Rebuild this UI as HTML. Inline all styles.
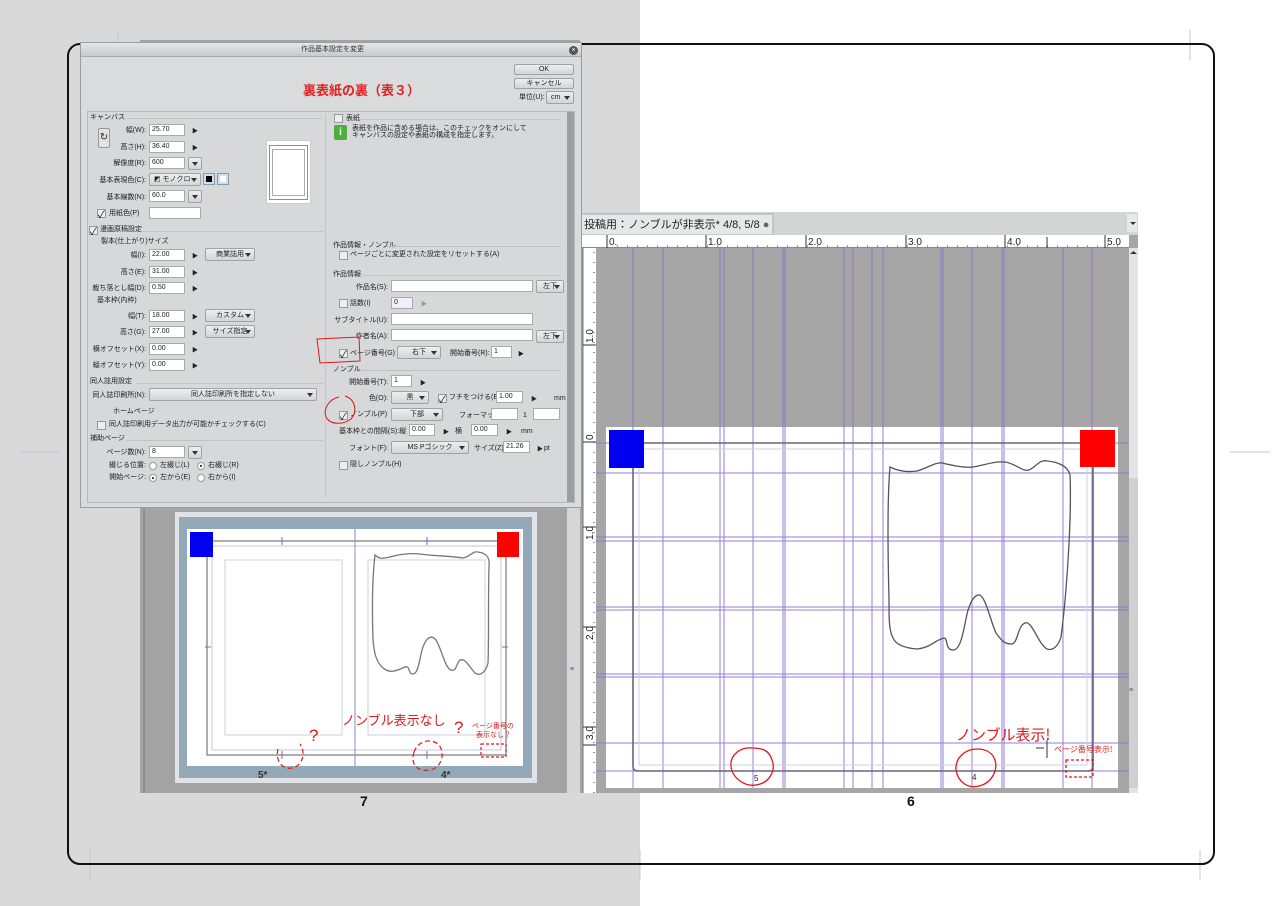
<!DOCTYPE html>
<html><head><meta charset="utf-8">
<style>
*{margin:0;padding:0;box-sizing:border-box}
body{width:1280px;height:906px;position:relative;overflow:hidden;background:#fff;font-family:"Liberation Sans","Noto Sans CJK JP",sans-serif}
.a{position:absolute}
#dlg{position:absolute;left:80px;top:42px;width:502px;height:466px;background:#d9dbdd;border:1px solid #9a9c9e;font-size:7px;color:#222}
#dlg .t{position:absolute;white-space:nowrap;line-height:10px}
.l{position:absolute;white-space:nowrap;text-align:right;line-height:10px}
.in{position:absolute;height:12px;background:#fff;border:1px solid #a8aaac;font-size:7px;line-height:10px;padding-left:2px}
.sel{position:absolute;height:13px;background:linear-gradient(#eceef0,#d2d4d6);border:1px solid #a0a2a4;border-radius:2px;font-size:7px;line-height:11px;text-align:center}
.sel:after{content:"";position:absolute;right:3px;top:4px;border:3px solid transparent;border-top:4px solid #333}
#dlg .sel.nb:after{display:none}
.cb{position:absolute;width:9px;height:9px;background:#eee;border:1px solid #999}
.ck:before{content:"✓";position:absolute;left:0;top:-4px;font-size:10px;color:#111}
.ar{position:absolute;font-size:6px}
.sec{position:absolute;height:1px;background:#bfc1c3}
.rd{position:absolute;width:8px;height:8px;border-radius:50%;background:#fff;border:1px solid #999}
.rd.on:after{content:"";position:absolute;left:2px;top:2px;width:2px;height:2px;border-radius:50%;background:#111}
</style></head><body>
<svg class="a" style="left:0;top:0" width="1280" height="906" viewBox="0 0 1280 906">
<rect x="0" y="0" width="640" height="906" fill="#d9d9d9"/>
<g stroke="#c4c4d8" stroke-width="1">
<line x1="118" y1="30" x2="118" y2="60"/><line x1="100" y1="48" x2="140" y2="48"/>
<line x1="1190" y1="30" x2="1190" y2="60"/><line x1="1230" y1="452" x2="1270" y2="452"/>
<line x1="20" y1="452" x2="60" y2="452"/><line x1="640" y1="850" x2="640" y2="880"/>
<line x1="90" y1="850" x2="90" y2="880"/><line x1="1200" y1="850" x2="1200" y2="880"/>
</g>
<rect x="140" y="40" width="440" height="753" fill="#a3a3a3"/>
<rect x="143" y="500" width="2" height="293" fill="#8e8e8e"/>
<rect x="567" y="505" width="13" height="288" fill="#d4d6d8"/>
<text x="570" y="671" font-size="7" fill="#555">≡</text>
<rect x="175" y="512" width="362" height="271" fill="#e0e4e6"/>
<rect x="179" y="517" width="353" height="261" fill="#93a9b7"/>
<rect x="187" y="529" width="336" height="237" fill="#fff"/>
<rect x="207" y="541" width="299" height="214" fill="none" stroke="#777" stroke-width="1.2"/>
<rect x="212" y="546" width="289" height="204" fill="none" stroke="#c4c4dc"/>
<line x1="355" y1="529" x2="355" y2="766" stroke="#8a8ab4"/>
<rect x="225" y="560" width="117" height="175" fill="none" stroke="#cfcfe0"/>
<rect x="368" y="560" width="117" height="175" fill="none" stroke="#cfcfe0"/>
<g stroke="#7070b0"><line x1="282" y1="537" x2="282" y2="545"/><line x1="278" y1="541" x2="286" y2="541"/><line x1="427" y1="537" x2="427" y2="545"/><line x1="423" y1="541" x2="431" y2="541"/><line x1="205" y1="647" x2="211" y2="647"/><line x1="502" y1="647" x2="508" y2="647"/><line x1="282" y1="751" x2="282" y2="759"/><line x1="427" y1="751" x2="427" y2="759"/></g>
<rect x="190" y="532" width="23" height="25" fill="#0000ee"/>
<rect x="497" y="532" width="22" height="25" fill="#f00"/>
<path d="M375,555 C380,560 385,558 390,557 C400,554 410,553 420,554 C435,556 450,556 463,558 C470,557 472,551 478,552 C486,553 490,557 489,566 C488,600 489,640 488,663 C486,672 480,677 475,673 C468,665 465,658 460,660 C456,663 457,672 451,670 C445,668 442,650 436,640 C430,633 425,640 422,650 C419,662 418,675 412,674 C408,673 410,665 405,667 C398,670 390,675 382,667 C375,660 374,650 373,640 C372,610 372,580 375,555Z" fill="none" stroke="#777" stroke-width="1.3"/>
<text x="258" y="778" font-size="10" font-weight="bold" fill="#333">5*</text>
<text x="441" y="778" font-size="10" font-weight="bold" fill="#333">4*</text>
<g stroke="#e01818" fill="none" stroke-width="1.2">
<path d="M278,749 C275,760 282,770 292,768 C303,766 306,752 300,744" stroke-dasharray="5,3"/>
<path d="M414,752 C410,765 418,772 430,770 C442,768 446,752 438,744 C430,738 418,741 414,752" stroke-dasharray="5,3"/>
<rect x="481" y="744" width="25" height="13" stroke-dasharray="3,2"/>
</g>
<text x="342" y="725" font-size="13" fill="#e01818" font-family="Noto Sans CJK JP">ノンブル表示なし</text>
<text x="309" y="741" font-size="17" fill="#e01818">?</text>
<text x="454" y="733" font-size="17" fill="#e01818">?</text>
<text x="472" y="728" font-size="7" fill="#e01818" font-family="Noto Sans CJK JP">ページ番号の</text>
<text x="476" y="737" font-size="7" fill="#e01818" font-family="Noto Sans CJK JP">表示なし？</text>
<text x="360" y="806" font-size="14" font-weight="bold" fill="#111">7</text>

<rect x="580" y="212" width="558" height="581" fill="#a6a6a6"/>
<rect x="580" y="212" width="558" height="23" fill="#d2d4d6"/>
<rect x="580" y="214" width="193" height="21" fill="#e6e7e8" stroke="#aaa"/>
<text x="584" y="228" font-size="11" fill="#222" font-family="Liberation Sans,Noto Sans CJK JP">投稿用：ノンブルが非表示* 4/8, 5/8 <tspan fill="#666">●</tspan></text>
<rect x="1127" y="214" width="10" height="18" fill="#e8e8e8"/><path d="M1130,222 l3,3 l3,-3z" fill="#333"/>
<rect x="580" y="235" width="549" height="13" fill="#fff"/>
<line x1="580" y1="247.5" x2="1129" y2="247.5" stroke="#888"/>
<g stroke="#333" stroke-width="1">
<line x1="607" y1="235" x2="607" y2="248"/><line x1="706" y1="235" x2="706" y2="248"/><line x1="806" y1="235" x2="806" y2="248"/><line x1="906" y1="235" x2="906" y2="248"/><line x1="1005" y1="235" x2="1005" y2="248"/><line x1="1105" y1="235" x2="1105" y2="248"/><line x1="1047" y1="237" x2="1047" y2="248"/>
</g>
<g stroke="#333" stroke-dasharray="1,9"><line x1="617" y1="246" x2="1125" y2="246"/></g>
<g font-size="10" fill="#222"><text x="609" y="245">0.</text><text x="708" y="245">1.0</text><text x="808" y="245">2.0</text><text x="908" y="245">3.0</text><text x="1007" y="245">4.0</text><text x="1107" y="245">5.0</text></g>
<rect x="583" y="248" width="13" height="545" fill="#fff"/>
<line x1="583" y1="248" x2="583" y2="793" stroke="#777"/>
<g stroke="#333" stroke-dasharray="1,9"><line x1="594" y1="252" x2="594" y2="793"/></g>
<g stroke="#333"><line x1="583" y1="345" x2="596" y2="345"/><line x1="583" y1="442" x2="596" y2="442"/><line x1="583" y1="527" x2="596" y2="527"/><line x1="583" y1="627" x2="596" y2="627"/><line x1="583" y1="727" x2="596" y2="727"/><line x1="583" y1="745" x2="596" y2="745"/></g>
<g font-size="10" fill="#222">
<text transform="translate(593,343) rotate(-90)">1.0</text>
<text transform="translate(593,440) rotate(-90)">0</text>
<text transform="translate(593,540) rotate(-90)">1.0</text>
<text transform="translate(593,640) rotate(-90)">2.0</text>
<text transform="translate(593,740) rotate(-90)">3.0</text>
</g>
<rect x="1129" y="248" width="9" height="545" fill="#e4e4e4"/>
<rect x="1129" y="478" width="9" height="310" fill="#d0d0d0"/>
<path d="M1130,254 l3.5,-3 l3.5,3z" fill="#333"/>
<text x="1129" y="692" font-size="7" fill="#555">≡</text>
<rect x="606" y="427" width="512" height="361" fill="#fff"/>
<g stroke="#9070d0" stroke-width="1" opacity="0.9">
<line x1="633" y1="248" x2="633" y2="788"/><line x1="663" y1="248" x2="663" y2="788"/><line x1="720" y1="248" x2="720" y2="788"/><line x1="724" y1="248" x2="724" y2="788"/><line x1="753" y1="248" x2="753" y2="788"/><line x1="783" y1="248" x2="783" y2="788"/><line x1="785" y1="248" x2="785" y2="788"/><line x1="844" y1="248" x2="844" y2="788"/><line x1="853" y1="248" x2="853" y2="788"/><line x1="872" y1="248" x2="872" y2="788"/><line x1="883" y1="248" x2="883" y2="788"/><line x1="941" y1="248" x2="941" y2="788"/><line x1="943" y1="248" x2="943" y2="788"/><line x1="972" y1="248" x2="972" y2="788"/><line x1="1002" y1="248" x2="1002" y2="788"/><line x1="1004" y1="248" x2="1004" y2="788"/><line x1="1063" y1="248" x2="1063" y2="788"/><line x1="1092" y1="248" x2="1092" y2="788"/>
<line x1="596" y1="443" x2="1129" y2="443"/><line x1="596" y1="473" x2="1129" y2="473"/><line x1="596" y1="537" x2="1129" y2="537"/><line x1="596" y1="541" x2="1129" y2="541"/><line x1="596" y1="607" x2="1129" y2="607"/><line x1="596" y1="610" x2="1129" y2="610"/><line x1="596" y1="674" x2="1129" y2="674"/><line x1="596" y1="677" x2="1129" y2="677"/><line x1="596" y1="743" x2="1129" y2="743"/><line x1="596" y1="771" x2="1129" y2="771"/>
</g>
<path d="M633,443 H1093 V766 Q1093,771 1088,771 H638 Q633,771 633,766 Z" fill="none" stroke="#6a6488" stroke-width="1.6"/>
<rect x="639" y="449" width="448" height="316" fill="none" stroke="#cfcfe4"/>
<rect x="609" y="430" width="35" height="38" fill="#0000ee"/>
<rect x="1080" y="430" width="35" height="37" fill="#f00"/>
<path d="M890,467 C900,472 910,472 917,471 C928,468 935,462 942,463 C955,466 965,468 973,467 C985,465 995,461 1005,462 C1015,463 1022,472 1029,470 C1036,467 1040,459 1047,461 C1058,462 1068,466 1070,475 C1072,520 1066,600 1061,637 C1058,647 1052,651 1047,649 C1038,644 1032,620 1025,623 C1017,626 1018,645 1011,644 C1003,644 1000,638 996,633 C990,620 985,593 978,595 C972,597 970,605 968,610 C964,625 962,650 953,650 C945,650 948,638 944,638 C935,640 930,648 917,649 C905,648 896,645 893,638 C889,630 889,620 889,600 C888,560 887,500 890,467Z" fill="none" stroke="#555" stroke-width="1.3"/>
<text x="754" y="781" font-size="8" fill="#222">5</text>
<text x="972" y="780" font-size="8" fill="#222">4</text>
<g stroke="#e01818" fill="none" stroke-width="1.3">
<path d="M752,748 C740,747 730,755 731,766 C732,778 745,787 756,785 C770,783 776,770 772,760 C769,750 762,748 752,748Z"/>
<path d="M977,749 C965,749 955,758 956,770 C958,782 968,789 979,786 C992,783 998,770 995,760 C992,752 986,749 977,749Z"/>
<rect x="1066" y="760" width="27" height="17" stroke-dasharray="3,2"/>
</g>
<g stroke="#333" stroke-width="1"><line x1="1047" y1="740" x2="1047" y2="758"/><line x1="1036" y1="748" x2="1044" y2="748"/></g>
<text x="956" y="740" font-size="15" fill="#e01818" font-family="Noto Sans CJK JP">ノンブル表示!</text>
<text x="1054" y="752" font-size="8" fill="#e01818" font-family="Noto Sans CJK JP">ページ番号表示!</text>
<rect x="580" y="793" width="60" height="13" fill="#d9d9d9"/>
<text x="907" y="806" font-size="14" font-weight="bold" fill="#111">6</text>
<rect x="68" y="44" width="1146" height="820" rx="12" fill="none" stroke="#111" stroke-width="2"/>
</svg>

<div id="dlg">
<div class="a" style="left:0;top:0;width:500px;height:14px;background:linear-gradient(#e4e6e8,#c8cacc);border-bottom:1px solid #aaa"></div>
<div class="t" style="left:220px;top:2px;color:#333">作品基本設定を変更</div>
<div class="a" style="left:488px;top:3px;width:9px;height:9px;border-radius:50%;background:#555;color:#fff;font-size:7px;line-height:9px;text-align:center">×</div>
<div class="sel nb" style="left:433px;top:21px;width:60px;height:11px;line-height:9px">OK</div>
<div class="sel nb" style="left:433px;top:35px;width:60px;height:11px;line-height:9px">キャンセル</div>
<div class="t" style="left:438px;top:50px">単位(U):</div>
<div class="sel" style="left:465px;top:48px;width:28px;text-align:left;padding-left:4px">cm</div>
<div class="t" style="left:222px;top:40px;font-size:13px;line-height:16px;font-weight:bold;color:#e52020">裏表紙の裏（表３）</div>

<div class="a" style="left:6px;top:68px;width:488px;height:392px;border:1px solid #b6b8ba;background:#d6d8da"></div>
<div class="a" style="left:486px;top:69px;width:7px;height:390px;background:#9c9ea0"></div>
<div class="a" style="left:244px;top:70px;width:1px;height:385px;background:#c4c6c8"></div>

<div class="t" style="left:9px;top:70px">キャンバス</div><div class="sec" style="left:46px;top:75px;width:195px"></div>
<div class="a" style="left:17px;top:85px;width:12px;height:20px;border:1px solid #999;border-radius:2px;background:#e2e2e2;font-size:10px;line-height:18px;text-align:center">↻</div>
<div class="l" style="left:20px;width:45px;top:83px">幅(W):</div><div class="in" style="left:68px;top:81px;width:36px">25.70</div><div class="ar" style="left:111px;top:83px">▶</div>
<div class="l" style="left:20px;width:45px;top:100px">高さ(H):</div><div class="in" style="left:68px;top:98px;width:36px">36.40</div><div class="ar" style="left:111px;top:100px">▶</div>
<div class="l" style="left:10px;width:55px;top:116px">解像度(R):</div><div class="in" style="left:68px;top:114px;width:36px">600</div><div class="sel" style="left:107px;top:114px;width:14px"></div>
<div class="l" style="left:0px;width:65px;top:133px">基本表現色(C):</div><div class="sel" style="left:68px;top:130px;width:52px;text-align:left;padding-left:4px">◩ モノクロ</div><div class="a" style="left:122px;top:130px;width:12px;height:12px;background:#cde;border:1px solid #89a"><div class="a" style="left:2px;top:2px;width:6px;height:6px;background:#000"></div></div><div class="a" style="left:136px;top:130px;width:12px;height:12px;background:#cde;border:1px solid #89a"><div class="a" style="left:2px;top:2px;width:6px;height:6px;background:#fff"></div></div>
<div class="l" style="left:10px;width:55px;top:150px">基本線数(N):</div><div class="in" style="left:68px;top:147px;width:36px">60.0</div><div class="sel" style="left:107px;top:147px;width:14px"></div>
<div class="cb ck" style="left:16px;top:166px"></div><div class="t" style="left:28px;top:166px">用紙色(P)</div><div class="in" style="left:68px;top:164px;width:52px"></div>
<div class="a" style="left:185px;top:97px;width:45px;height:64px;background:#fff;border:1px solid #ccc"><div class="a" style="left:2px;top:4px;width:39px;height:55px;border:1px solid #8888cc"></div><div class="a" style="left:5px;top:8px;width:33px;height:47px;border:1px solid #aaa"></div></div>

<div class="cb ck" style="left:8px;top:183px"></div><div class="t" style="left:19px;top:182px">漫画原稿設定</div><div class="sec" style="left:62px;top:188px;width:180px"></div>
<div class="t" style="left:20px;top:194px">製本(仕上がり)サイズ</div>
<div class="l" style="left:10px;width:55px;top:208px">幅(I):</div><div class="in" style="left:68px;top:206px;width:36px">22.00</div><div class="ar" style="left:111px;top:208px">▶</div><div class="sel" style="left:124px;top:205px;width:50px">商業誌用</div>
<div class="l" style="left:10px;width:55px;top:225px">高さ(E):</div><div class="in" style="left:68px;top:223px;width:36px">31.00</div><div class="ar" style="left:111px;top:225px">▶</div>
<div class="l" style="left:0px;width:65px;top:241px">裁ち落とし幅(D):</div><div class="in" style="left:68px;top:239px;width:36px">0.50</div><div class="ar" style="left:111px;top:241px">▶</div>
<div class="t" style="left:16px;top:253px">基本枠(内枠)</div>
<div class="l" style="left:10px;width:55px;top:269px">幅(T):</div><div class="in" style="left:68px;top:267px;width:36px">18.00</div><div class="ar" style="left:111px;top:269px">▶</div><div class="sel" style="left:124px;top:266px;width:50px">カスタム</div>
<div class="l" style="left:10px;width:55px;top:285px">高さ(G):</div><div class="in" style="left:68px;top:283px;width:36px">27.00</div><div class="ar" style="left:111px;top:285px">▶</div><div class="sel" style="left:124px;top:282px;width:50px">サイズ指定</div>
<div class="l" style="left:0px;width:65px;top:302px">横オフセット(X):</div><div class="in" style="left:68px;top:300px;width:36px">0.00</div><div class="ar" style="left:111px;top:302px">▶</div>
<div class="l" style="left:0px;width:65px;top:318px">縦オフセット(Y):</div><div class="in" style="left:68px;top:316px;width:36px">0.00</div><div class="ar" style="left:111px;top:318px">▶</div>
<div class="t" style="left:9px;top:334px">同人誌用設定</div><div class="sec" style="left:55px;top:340px;width:187px"></div>
<div class="l" style="left:0px;width:65px;top:348px">同人誌印刷所(N):</div><div class="sel" style="left:68px;top:345px;width:168px">同人誌印刷所を指定しない</div>
<div class="t" style="left:32px;top:364px">ホームページ</div>
<div class="cb" style="left:16px;top:378px"></div><div class="t" style="left:28px;top:377px">同人誌印刷用データ出力が可能かチェックする(C)</div>
<div class="t" style="left:9px;top:391px">補助ページ</div><div class="sec" style="left:45px;top:397px;width:197px"></div>
<div class="l" style="left:10px;width:55px;top:405px">ページ数(N):</div><div class="in" style="left:68px;top:403px;width:36px">8</div><div class="sel" style="left:107px;top:403px;width:14px"></div>
<div class="l" style="left:10px;width:55px;top:418px">綴じる位置:</div><div class="rd" style="left:68px;top:419px"></div><div class="t" style="left:79px;top:418px">左綴じ(L)</div><div class="rd on" style="left:116px;top:419px"></div><div class="t" style="left:127px;top:418px">右綴じ(R)</div>
<div class="l" style="left:10px;width:55px;top:430px">開始ページ:</div><div class="rd on" style="left:68px;top:431px"></div><div class="t" style="left:79px;top:430px">左から(E)</div><div class="rd" style="left:116px;top:431px"></div><div class="t" style="left:127px;top:430px">右から(I)</div>

<div class="cb" style="left:253px;top:71px"></div><div class="t" style="left:265px;top:71px">表紙</div><div class="sec" style="left:280px;top:76px;width:200px"></div>
<div class="a" style="left:253px;top:82px;width:13px;height:15px;background:#4caf3c;border-radius:2px;color:#fff;font-size:10px;line-height:15px;text-align:center;font-weight:bold">i</div>
<div class="t" style="left:271px;top:81px">表紙を作品に含める場合は、このチェックをオンにして</div>
<div class="t" style="left:271px;top:88px">キャンバスの設定や表紙の構成を指定します。</div>
<div class="t" style="left:252px;top:198px">作品情報・ノンブル</div><div class="sec" style="left:305px;top:203px;width:175px"></div>
<div class="cb" style="left:258px;top:208px"></div><div class="t" style="left:269px;top:207px">ページごとに変更された設定をリセットする(A)</div>
<div class="t" style="left:252px;top:227px">作品情報</div><div class="sec" style="left:282px;top:232px;width:198px"></div>
<div class="l" style="left:240px;width:67px;top:240px">作品名(S):</div><div class="in" style="left:310px;top:237px;width:142px"></div><div class="sel" style="left:455px;top:237px;width:28px">左下</div>
<div class="cb" style="left:258px;top:256px"></div><div class="t" style="left:269px;top:256px">話数(I)</div><div class="in" style="left:310px;top:254px;width:22px;background:#eef2f8">0</div><div class="ar" style="left:340px;top:256px;color:#999">▶</div>
<div class="l" style="left:240px;width:67px;top:273px">サブタイトル(U):</div><div class="in" style="left:310px;top:270px;width:142px"></div>
<div class="l" style="left:240px;width:67px;top:289px">作者名(A):</div><div class="in" style="left:310px;top:286px;width:142px"></div><div class="sel" style="left:455px;top:287px;width:28px">左下</div>
<div class="cb ck" style="left:258px;top:306px"></div><div class="t" style="left:269px;top:306px">ページ番号(G)</div><div class="sel" style="left:316px;top:303px;width:44px">右下</div><div class="t" style="left:369px;top:306px">開始番号(R):</div><div class="in" style="left:410px;top:303px;width:21px">1</div><div class="ar" style="left:437px;top:306px">▶</div>
<div class="t" style="left:252px;top:322px">ノンブル</div><div class="sec" style="left:280px;top:327px;width:200px"></div>
<div class="l" style="left:240px;width:67px;top:335px">開始番号(T):</div><div class="in" style="left:310px;top:332px;width:21px">1</div><div class="ar" style="left:339px;top:335px">▶</div>
<div class="l" style="left:240px;width:67px;top:351px">色(O):</div><div class="sel" style="left:310px;top:348px;width:38px">黒</div><div class="cb ck" style="left:357px;top:351px"></div><div class="t" style="left:368px;top:350px">フチをつける(E):</div><div class="in" style="left:415px;top:348px;width:27px">1.00</div><div class="ar" style="left:450px;top:351px">▶</div><div class="t" style="left:473px;top:351px">mm</div>
<div class="cb ck" style="left:258px;top:368px"></div><div class="t" style="left:269px;top:367px">ノンブル(P)</div><div class="sel" style="left:310px;top:365px;width:52px">下部</div><div class="t" style="left:378px;top:368px">フォーマット:</div><div class="in" style="left:410px;top:365px;width:27px"></div><div class="t" style="left:442px;top:368px">1</div><div class="in" style="left:452px;top:365px;width:27px"></div>
<div class="t" style="left:258px;top:384px">基本枠との間隔(S):縦</div><div class="in" style="left:328px;top:381px;width:26px">0.00</div><div class="ar" style="left:362px;top:384px">▶</div><div class="t" style="left:374px;top:384px">横</div><div class="in" style="left:390px;top:381px;width:27px">0.00</div><div class="ar" style="left:425px;top:384px">▶</div><div class="t" style="left:440px;top:384px">mm</div>
<div class="l" style="left:240px;width:67px;top:401px">フォント(F):</div><div class="sel" style="left:310px;top:398px;width:78px">MS Pゴシック</div><div class="t" style="left:393px;top:401px">サイズ(Z):</div><div class="in" style="left:422px;top:398px;width:27px">21.26</div><div class="ar" style="left:456px;top:401px">▶</div><div class="t" style="left:463px;top:401px">pt</div>
<div class="cb" style="left:258px;top:418px"></div><div class="t" style="left:269px;top:417px">隠しノンブル(H)</div>
<svg class="a" style="left:0;top:0" width="502" height="466">
<path d="M236,296 L278,294 L279,318 L239,320 Z" fill="none" stroke="#e01818" stroke-width="1"/>
<path d="M258,354 C248,356 242,366 245,374 C249,382 262,382 270,376 C277,368 274,356 264,353" fill="none" stroke="#e01818" stroke-width="1"/>
</svg>
</div>
</body></html>
